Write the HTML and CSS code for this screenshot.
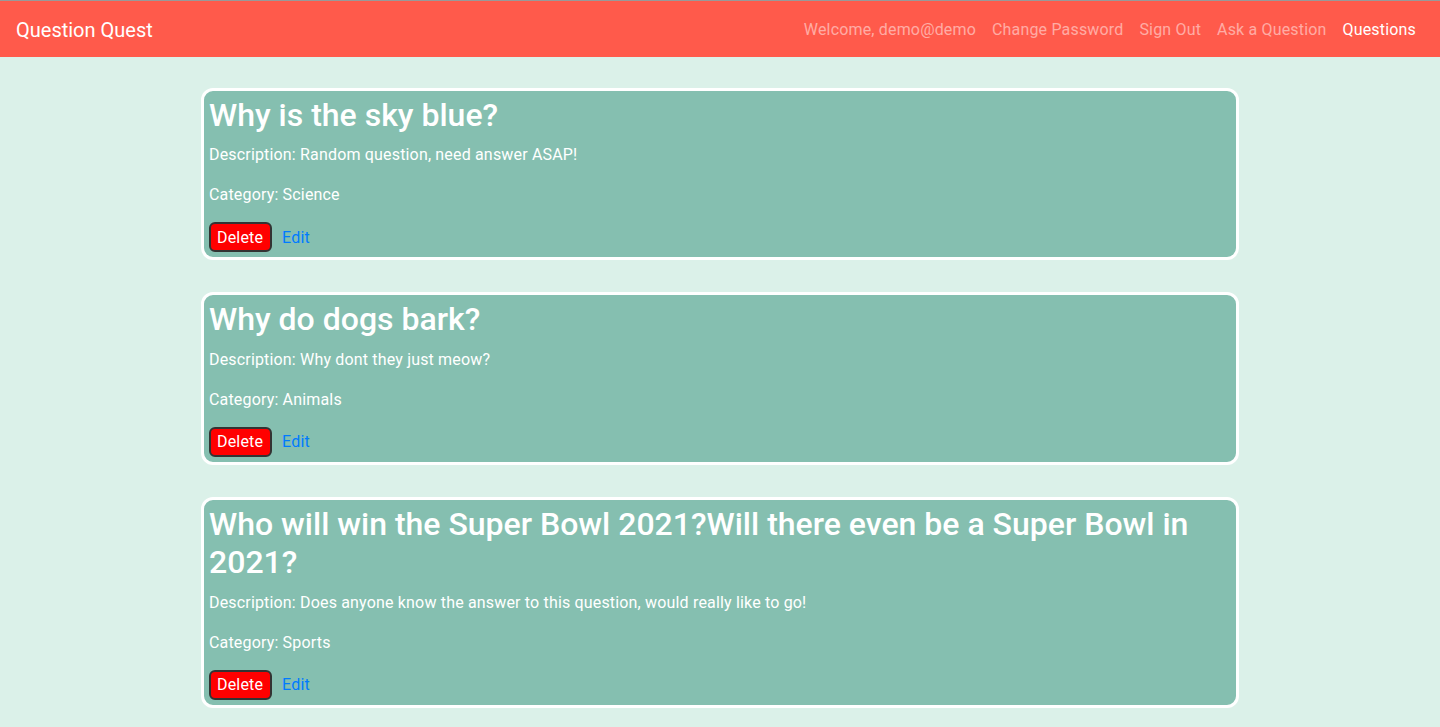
FILE: index.html
```html
<!DOCTYPE html>
<html lang="en">
<head>
<meta charset="utf-8">
<title>Question Quest</title>
<link rel="stylesheet" href="styles.css">
</head>
<body>
<nav class="navbar">
  <a class="brand" href="#">Question Quest</a>
  <div class="nav-links">
    <span class="nav-link">Welcome, demo@demo</span>
    <a class="nav-link" href="#">Change Password</a>
    <a class="nav-link" href="#">Sign Out</a>
    <a class="nav-link" href="#">Ask a Question</a>
    <a class="nav-link active" href="#">Questions</a>
  </div>
</nav>
<main class="list">
  <div class="card">
    <h2 class="title">Why is the sky blue?</h2>
    <p class="line">Description: Random question, need answer ASAP!</p>
    <p class="line">Category: Science</p>
    <div class="actions"><button class="delete">Delete</button><a class="edit" href="#">Edit</a></div>
  </div>
  <div class="card">
    <h2 class="title">Why do dogs bark?</h2>
    <p class="line">Description: Why dont they just meow?</p>
    <p class="line">Category: Animals</p>
    <div class="actions"><button class="delete">Delete</button><a class="edit" href="#">Edit</a></div>
  </div>
  <div class="card">
    <h2 class="title">Who will win the Super Bowl 2021?Will there even be a Super Bowl in 2021?</h2>
    <p class="line">Description: Does anyone know the answer to this question, would really like to go!</p>
    <p class="line">Category: Sports</p>
    <div class="actions"><button class="delete">Delete</button><a class="edit" href="#">Edit</a></div>
  </div>
</main>
</body>
</html>
```

FILE: styles.css
```css
* { box-sizing: border-box; }
html, body { margin: 0; padding: 0; }
body {
  background: #dbf1e9;
  font-family: Roboto, "Noto Sans", sans-serif;
  font-size: 16px;
  line-height: 1.5;
  letter-spacing: 0.17px;
  color: #fff;
}
.navbar {
  display: flex;
  align-items: center;
  justify-content: space-between;
  height: 57px;
  padding: 9px 16px 7px;
  background: #ff5a4b;
  border-top: 1px solid #999;
}
.brand {
  color: #fff;
  text-decoration: none;
  font-size: 20px;
  line-height: 30px;
  letter-spacing: 0;
}
.nav-links { display: flex; }
.nav-link {
  padding: 8px 8px;
  color: rgba(255, 255, 255, 0.5);
  text-decoration: none;
  line-height: 24px;
}
.nav-link.active { color: #fff; }
.list {
  width: 1038px;
  margin: 31px auto 0;
  display: flex;
  flex-direction: column;
  gap: 32px;
}
.card {
  background: #85bfb0;
  border: 3px solid #fff;
  border-radius: 12px;
  padding: 5px;
}
.title {
  margin: 0 0 9px;
  font-size: 32px;
  font-weight: 500;
  line-height: 1.2;
  letter-spacing: 0;
}
.line { margin: 0 0 16px; }
.line + .line { margin-bottom: 15px; }
.actions {
  display: flex;
  align-items: center;
  gap: 10px;
}
.delete {
  height: 30px;
  padding: 0 7px 0 6px;
  font-family: inherit;
  font-size: 16px;
  letter-spacing: 0.17px;
  color: #fff;
  background: #ff0000;
  border: 2px solid #333;
  border-radius: 6px;
}
.edit {
  color: #007bff;
  text-decoration: none;
  padding-top: 1px;
}
```
